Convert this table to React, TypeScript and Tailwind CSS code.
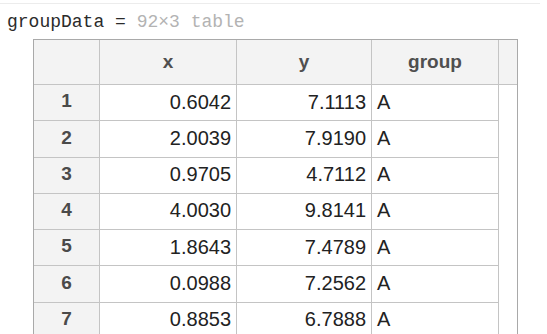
import React from "react";

const rows = [
  { x: "0.6042", y: "7.1113", g: "A" },
  { x: "2.0039", y: "7.9190", g: "A" },
  { x: "0.9705", y: "4.7112", g: "A" },
  { x: "4.0030", y: "9.8141", g: "A" },
  { x: "1.8643", y: "7.4789", g: "A" },
  { x: "0.0988", y: "7.2562", g: "A" },
  { x: "0.8853", y: "6.7888", g: "A" },
  { x: "3.1212", y: "8.0042", g: "A" },
];

export default function App() {
  return (
    <div className="w-[547px] h-[334px] overflow-hidden bg-white">
      {/* top divider */}
      <div className="mt-[3px] h-px w-[540px] bg-[#ececec]" />

      {/* variable name line */}
      <div className="mt-[6px] pl-[7px] h-[24px] leading-[24px] text-[18px] font-['Liberation_Mono',monospace] whitespace-pre">
        <span className="text-[#2b2b2b]">groupData = </span>
        <span className="text-[#b3b3b3]">92×3 table</span>
      </div>

      {/* table */}
      <div className="mt-[5px] ml-[33px] w-[485px] border-t border-l border-r border-[#a9a9a9] font-['Liberation_Sans',Arial,sans-serif]">
        {/* header */}
        <div className="flex h-[45px] bg-[#f3f3f3] border-b border-[#c4c4c4] text-[19px] font-bold text-[#4f4f4f]">
          <div className="w-[66px] border-r border-[#c4c4c4]" />
          <div className="w-[137px] border-r border-[#c4c4c4] flex items-center justify-center">x</div>
          <div className="w-[135px] border-r border-[#c4c4c4] flex items-center justify-center">y</div>
          <div className="w-[127px] border-r border-[#c4c4c4] flex items-center justify-center">group</div>
          <div className="flex-1" />
        </div>

        {/* body */}
        {rows.map((r, i) => (
          <div key={i} className="flex h-[36.25px] text-[20px] text-[#222222]">
            <div className="w-[66px] bg-[#f3f3f3] border-r border-b border-[#c4c4c4] flex items-center justify-center font-bold text-[19px] text-[#4a4a4a] pb-[2px]">
              {i + 1}
            </div>
            <div className="w-[137px] border-r border-b border-[#c4c4c4] flex items-center justify-end pr-[5px] pb-[2px]">
              {r.x}
            </div>
            <div className="w-[135px] border-r border-b border-[#c4c4c4] flex items-center justify-end pr-[5px] pb-[2px]">
              {r.y}
            </div>
            <div className="w-[127px] border-r border-b border-[#c4c4c4] flex items-center pl-[5px] pb-[2px]">
              {r.g}
            </div>
            <div className="flex-1" />
          </div>
        ))}
      </div>
    </div>
  );
}
